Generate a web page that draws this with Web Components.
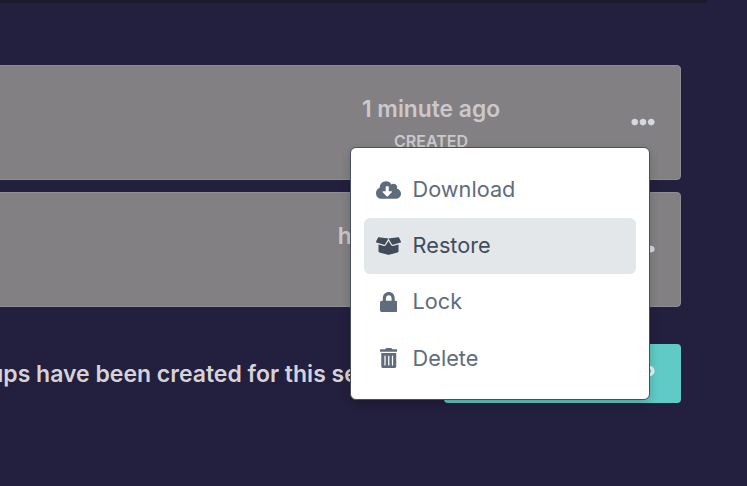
<!DOCTYPE html>
<html lang="en">
<head>
<meta charset="utf-8">
<title>Backups</title>
<style>
html,body{margin:0;height:100%;background:#231f3e;overflow:hidden;font-family:"Inter","Liberation Sans",sans-serif}
</style>
</head>
<body>
<backup-page>
  <backup-card time="1 minute ago" label="CREATED">
    <action-menu slot="menu">
      <menu-item icon="download">Download</menu-item>
      <menu-item icon="restore" active>Restore</menu-item>
      <menu-item icon="lock">Lock</menu-item>
      <menu-item icon="delete" last>Delete</menu-item>
    </action-menu>
  </backup-card>
  <backup-card time="half an hour ago" label="CREATED" wide></backup-card>
  <backup-footer>0 of 3 backups have been created for this server.</backup-footer>
</backup-page>
<script>
const ICONS={
download:['0 0 640 512','M537.6 226.6c4.1-10.7 6.4-22.4 6.4-34.6 0-53-43-96-96-96-19.7 0-38.1 6-53.3 16.2C367 64.2 315.3 32 256 32c-88.4 0-160 71.6-160 160 0 2.7.1 5.4.2 8.1C40.2 219.8 0 273.2 0 336c0 79.5 64.5 144 144 144h368c70.7 0 128-57.3 128-128 0-61.9-44-113.6-102.4-125.4zm-132.9 88.7L299.3 420.7c-6.2 6.2-16.4 6.2-22.6 0L171.3 315.3c-10.1-10.1-2.9-27.3 11.3-27.3H248V176c0-8.8 7.2-16 16-16h48c8.8 0 16 7.2 16 16v112h65.4c14.2 0 21.4 17.2 11.3 27.3z'],
restore:['0 0 640 512','M425.7 256c-16.9 0-32.8-9-41.4-23.4L320 126l-64.2 106.6c-8.7 14.5-24.6 23.5-41.5 23.5-4.5 0-9-.6-13.3-1.9L64 215v178c0 14.7 10 27.5 24.2 31l216.2 54.1c10.2 2.5 20.9 2.5 31 0L551.8 424c14.2-3.6 24.2-16.4 24.2-31V215l-137 39.1c-4.3 1.3-8.8 1.9-13.3 1.9zm212.6-112.2L586.8 41c-3.1-6.2-9.8-9.8-16.7-8.9L320 64l91.7 152.1c3.8 6.3 11.4 9.3 18.5 7.3l197.9-56.5c9.9-2.9 14.7-13.9 10.2-23.1zM53.2 41L1.7 143.8c-4.6 9.2.3 20.2 10.1 23l197.9 56.5c7.1 2 14.7-1 18.5-7.3L320 64 69.8 32.1c-6.9-.8-13.5 2.7-16.6 8.9z'],
lock:['0 0 448 512','M400 224h-24v-72C376 68.2 307.8 0 224 0S72 68.2 72 152v72H48c-26.5 0-48 21.5-48 48v192c0 26.5 21.5 48 48 48h352c26.5 0 48-21.5 48-48V272c0-26.5-21.5-48-48-48zm-104 0H152v-72c0-39.7 32.3-72 72-72s72 32.3 72 72v72z'],
delete:['0 0 448 512','M32 464a48 48 0 0 0 48 48h288a48 48 0 0 0 48-48V128H32zm272-256a16 16 0 0 1 32 0v224a16 16 0 0 1-32 0zm-96 0a16 16 0 0 1 32 0v224a16 16 0 0 1-32 0zm-96 0a16 16 0 0 1 32 0v224a16 16 0 0 1-32 0zM432 32H312l-9.4-18.7A24 24 0 0 0 281.1 0H166.8a23.72 23.72 0 0 0-21.4 13.3L136 32H16A16 16 0 0 0 0 48v32a16 16 0 0 0 16 16h416a16 16 0 0 0 16-16V48a16 16 0 0 0-16-16z'],
dots:['0 0 512 512','M328 256c0 39.8-32.2 72-72 72s-72-32.2-72-72 32.2-72 72-72 72 32.2 72 72zm104-72c-39.8 0-72 32.2-72 72s32.2 72 72 72 72-32.2 72-72-32.2-72-72-72zm-352 0c-39.8 0-72 32.2-72 72s32.2 72 72 72 72-32.2 72-72-32.2-72-72-72z']
};
const svg=(n,css='')=>`<svg viewBox="${ICONS[n][0]}" style="${css}" aria-hidden="true"><path fill="currentColor" d="${ICONS[n][1]}"/></svg>`;
const def=(name,html)=>customElements.define(name,class extends HTMLElement{
  constructor(){super();this.attachShadow({mode:'open'});}
  connectedCallback(){this.shadowRoot.innerHTML=typeof html==='function'?html(this):html;}
});
def('backup-page',`<style>
:host{display:block;position:relative;height:486px;overflow:hidden}
.bar{height:3px;width:707px;background:#1c1a2d}
main{display:flex;flex-direction:column;gap:12px;padding:62px 66px 0 0;margin-left:-12px}
</style><div class="bar"></div><main><slot></slot></main>`);
def('backup-card',el=>`<style>
:host{display:block;position:relative}
.card{box-sizing:border-box;height:115px;display:flex;align-items:center;justify-content:flex-end;background:#838083;border:1px solid #8f8c93;border-radius:4px;padding:0 25px 0 0}
.col{width:200px;margin-right:100px;display:flex;flex-direction:column;align-items:center;color:#cbc8cb;white-space:nowrap}
.time{font:600 22.8px/30px "Inter","Liberation Sans",sans-serif;margin-top:1px}
:host([wide]) .time{word-spacing:2.7px}
.lab{font:600 16px/20px "Inter","Liberation Sans",sans-serif;margin:7px 0 1px}
.more{display:flex;color:#d5d8de;margin-top:-1px}
</style><div class="card"><div class="col"><div class="time">${el.getAttribute('time')}</div><div class="lab">${el.getAttribute('label')}</div></div><div class="more">${svg('dots','width:24px;height:24px')}</div></div><slot name="menu"></slot>`);
def('action-menu',`<style>
:host{display:block;position:absolute;z-index:5;top:82px;right:31px;width:300px;box-sizing:border-box;background:#fff;border:1px solid #47505e;border-radius:6px;padding:14px 13px 13px;box-shadow:0 4px 10px rgba(0,0,0,.18)}
</style><slot></slot>`);
def('menu-item',el=>{const a=el.hasAttribute('active');return `<style>
:host{display:flex;align-items:center;height:56px;box-sizing:border-box;padding-left:12px;border-radius:6px;background:${a?'#e4e7ea':'transparent'};color:${a?'#414c5a':'#5f6c7b'};font:400 21.7px/28px "Inter","Liberation Sans",sans-serif}
.i{width:25px;height:20px;display:flex;justify-content:center;margin-right:11.6px}
.l{padding-bottom:2px}
:host([last]) .l{padding-bottom:0}
</style><span class="i">${svg(el.getAttribute('icon'),'height:20px')}</span><span class="l"><slot></slot></span>`});
def('backup-footer',`<style>
:host{display:flex;align-items:center;justify-content:flex-end;height:59px;margin-top:25px;white-space:nowrap}
.t{color:#d6d3d6;font:600 23px/28px "Inter","Liberation Sans",sans-serif;margin-right:35px}
button{box-sizing:border-box;width:237px;height:59px;flex:none;border:0;border-radius:4px;background:#5fcac6;color:#e6f6f5;font:700 20px/28px "Inter","Liberation Sans",sans-serif;text-align:right;padding:0 26px}
</style><span class="t"><slot></slot></span><button>CREATE BACKUP</button>`);
</script>
</body>
</html>
